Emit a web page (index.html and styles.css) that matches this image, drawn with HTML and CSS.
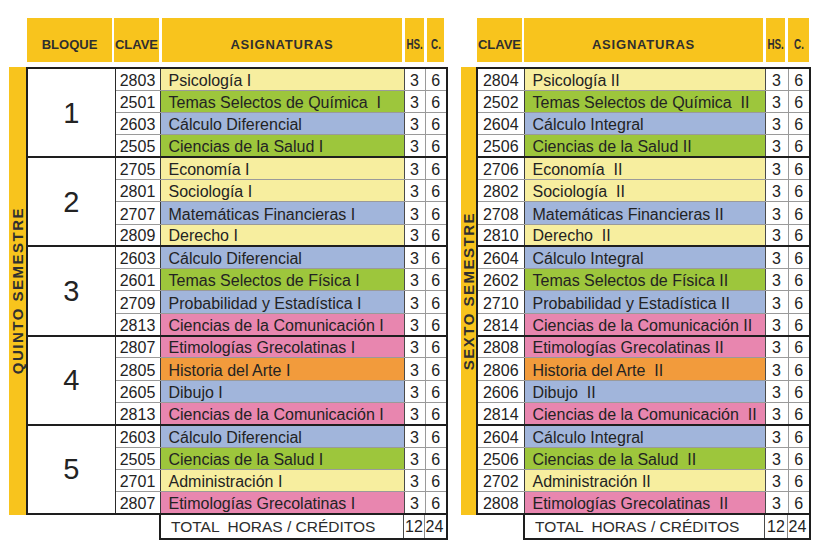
FILE: index.html
```html
<!DOCTYPE html>
<html lang="es">
<head>
<meta charset="utf-8">
<title>Quinto y Sexto Semestre</title>
<link rel="stylesheet" href="styles.css">
</head>
<body>
<div class="page">
  <section class="panel">
    <div class="head head-left">
      <div class="hcell h-bloque">BLOQUE</div>
      <div class="hcell h-clave">CLAVE</div>
      <div class="hcell h-asig">ASIGNATURAS</div>
      <div class="hcell h-hs"><span class="narrow">HS.</span></div>
      <div class="hcell h-c"><span class="narrow">C.</span></div>
    </div>
    <div class="body">
      <div class="side side-left"><span class="side-text">QUINTO SEMESTRE</span></div>
      <table class="grid grid-left">
        <colgroup>
          <col class="c-bloque"><col class="c-clave"><col class="c-asig"><col class="c-hs"><col class="c-c">
        </colgroup>
        <tbody>
          <tr><td class="bloque" rowspan="4">1</td><td class="code">2803</td><td class="subj yellow">Psicología I</td><td class="num">3</td><td class="num cr">6</td></tr>
          <tr><td class="code">2501</td><td class="subj green">Temas Selectos de Química &nbsp;I</td><td class="num">3</td><td class="num cr">6</td></tr>
          <tr><td class="code">2603</td><td class="subj blue">Cálculo Diferencial</td><td class="num">3</td><td class="num cr">6</td></tr>
          <tr><td class="code">2505</td><td class="subj green">Ciencias de la Salud I</td><td class="num">3</td><td class="num cr">6</td></tr>
        </tbody>
        <tbody>
          <tr><td class="bloque" rowspan="4">2</td><td class="code">2705</td><td class="subj yellow">Economía I</td><td class="num">3</td><td class="num cr">6</td></tr>
          <tr><td class="code">2801</td><td class="subj yellow">Sociología I</td><td class="num">3</td><td class="num cr">6</td></tr>
          <tr><td class="code">2707</td><td class="subj blue">Matemáticas Financieras I</td><td class="num">3</td><td class="num cr">6</td></tr>
          <tr><td class="code">2809</td><td class="subj yellow">Derecho I</td><td class="num">3</td><td class="num cr">6</td></tr>
        </tbody>
        <tbody>
          <tr><td class="bloque" rowspan="4">3</td><td class="code">2603</td><td class="subj blue">Cálculo Diferencial</td><td class="num">3</td><td class="num cr">6</td></tr>
          <tr><td class="code">2601</td><td class="subj green">Temas Selectos de Física I</td><td class="num">3</td><td class="num cr">6</td></tr>
          <tr><td class="code">2709</td><td class="subj blue">Probabilidad y Estadística I</td><td class="num">3</td><td class="num cr">6</td></tr>
          <tr><td class="code">2813</td><td class="subj pink">Ciencias de la Comunicación I</td><td class="num">3</td><td class="num cr">6</td></tr>
        </tbody>
        <tbody>
          <tr><td class="bloque" rowspan="4">4</td><td class="code">2807</td><td class="subj pink">Etimologías Grecolatinas I</td><td class="num">3</td><td class="num cr">6</td></tr>
          <tr><td class="code">2805</td><td class="subj orange">Historia del Arte I</td><td class="num">3</td><td class="num cr">6</td></tr>
          <tr><td class="code">2605</td><td class="subj blue">Dibujo I</td><td class="num">3</td><td class="num cr">6</td></tr>
          <tr><td class="code">2813</td><td class="subj pink">Ciencias de la Comunicación I</td><td class="num">3</td><td class="num cr">6</td></tr>
        </tbody>
        <tbody>
          <tr><td class="bloque" rowspan="4">5</td><td class="code">2603</td><td class="subj blue">Cálculo Diferencial</td><td class="num">3</td><td class="num cr">6</td></tr>
          <tr><td class="code">2505</td><td class="subj green">Ciencias de la Salud I</td><td class="num">3</td><td class="num cr">6</td></tr>
          <tr><td class="code">2701</td><td class="subj yellow">Administración I</td><td class="num">3</td><td class="num cr">6</td></tr>
          <tr><td class="code">2807</td><td class="subj pink">Etimologías Grecolatinas I</td><td class="num">3</td><td class="num cr">6</td></tr>
        </tbody>
      </table>
    </div>
    <div class="total total-left">
      <div class="t-label t-label-left">TOTAL &nbsp;HORAS / CRÉDITOS</div>
      <div class="t-num t-hs-left">12</div>
      <div class="t-num t-c">24</div>
    </div>
  </section>

  <section class="panel">
    <div class="head head-right">
      <div class="hcell h-clave-r">CLAVE</div>
      <div class="hcell h-asig-r">ASIGNATURAS</div>
      <div class="hcell h-hs"><span class="narrow">HS.</span></div>
      <div class="hcell h-c-r"><span class="narrow">C.</span></div>
    </div>
    <div class="body">
      <div class="side side-right"><span class="side-text">SEXTO SEMESTRE</span></div>
      <table class="grid grid-right">
        <colgroup>
          <col class="c-clave-r"><col class="c-asig-r"><col class="c-hs-r"><col class="c-c">
        </colgroup>
        <tbody>
          <tr><td class="code">2804</td><td class="subj yellow">Psicología II</td><td class="num">3</td><td class="num cr">6</td></tr>
          <tr><td class="code">2502</td><td class="subj green">Temas Selectos de Química &nbsp;II</td><td class="num">3</td><td class="num cr">6</td></tr>
          <tr><td class="code">2604</td><td class="subj blue">Cálculo Integral</td><td class="num">3</td><td class="num cr">6</td></tr>
          <tr><td class="code">2506</td><td class="subj green">Ciencias de la Salud II</td><td class="num">3</td><td class="num cr">6</td></tr>
        </tbody>
        <tbody>
          <tr><td class="code">2706</td><td class="subj yellow">Economía &nbsp;II</td><td class="num">3</td><td class="num cr">6</td></tr>
          <tr><td class="code">2802</td><td class="subj yellow">Sociología &nbsp;II</td><td class="num">3</td><td class="num cr">6</td></tr>
          <tr><td class="code">2708</td><td class="subj blue">Matemáticas Financieras II</td><td class="num">3</td><td class="num cr">6</td></tr>
          <tr><td class="code">2810</td><td class="subj yellow">Derecho &nbsp;II</td><td class="num">3</td><td class="num cr">6</td></tr>
        </tbody>
        <tbody>
          <tr><td class="code">2604</td><td class="subj blue">Cálculo Integral</td><td class="num">3</td><td class="num cr">6</td></tr>
          <tr><td class="code">2602</td><td class="subj green">Temas Selectos de Física II</td><td class="num">3</td><td class="num cr">6</td></tr>
          <tr><td class="code">2710</td><td class="subj blue">Probabilidad y Estadística II</td><td class="num">3</td><td class="num cr">6</td></tr>
          <tr><td class="code">2814</td><td class="subj pink">Ciencias de la Comunicación II</td><td class="num">3</td><td class="num cr">6</td></tr>
        </tbody>
        <tbody>
          <tr><td class="code">2808</td><td class="subj pink">Etimologías Grecolatinas II</td><td class="num">3</td><td class="num cr">6</td></tr>
          <tr><td class="code">2806</td><td class="subj orange">Historia del Arte &nbsp;II</td><td class="num">3</td><td class="num cr">6</td></tr>
          <tr><td class="code">2606</td><td class="subj blue">Dibujo &nbsp;II</td><td class="num">3</td><td class="num cr">6</td></tr>
          <tr><td class="code">2814</td><td class="subj pink">Ciencias de la Comunicación &nbsp;II</td><td class="num">3</td><td class="num cr">6</td></tr>
        </tbody>
        <tbody>
          <tr><td class="code">2604</td><td class="subj blue">Cálculo Integral</td><td class="num">3</td><td class="num cr">6</td></tr>
          <tr><td class="code">2506</td><td class="subj green">Ciencias de la Salud &nbsp;II</td><td class="num">3</td><td class="num cr">6</td></tr>
          <tr><td class="code">2702</td><td class="subj yellow">Administración II</td><td class="num">3</td><td class="num cr">6</td></tr>
          <tr><td class="code">2808</td><td class="subj pink">Etimologías Grecolatinas &nbsp;II</td><td class="num">3</td><td class="num cr">6</td></tr>
        </tbody>
      </table>
    </div>
    <div class="total total-right">
      <div class="t-label t-label-right">TOTAL &nbsp;HORAS / CRÉDITOS</div>
      <div class="t-num t-hs-right">12</div>
      <div class="t-num t-c">24</div>
    </div>
  </section>
</div>
</body>
</html>
```

FILE: styles.css
```css
html, body {
  margin: 0;
  padding: 0;
  background: #ffffff;
}

body {
  font-family: "Liberation Sans", Arial, sans-serif;
  color: #222222;
}

.page {
  display: flex;
  align-items: flex-start;
  gap: 13px;
  padding: 18px 0 0 9px;
}

.panel {
  display: flex;
  flex-direction: column;
}

/* ---------- header ---------- */
.head {
  display: flex;
  height: 44px;
  margin-bottom: 5px;
}

.head-left {
  margin-left: 18px;
}

.head-right {
  margin-left: 16px;
}

.hcell {
  background: #f8c41d;
  display: flex;
  align-items: flex-end;
  justify-content: center;
  padding-bottom: 10px;
  box-sizing: border-box;
  font-weight: bold;
  font-size: 13px;
  line-height: 15px;
  color: #2f2f2f;
  white-space: nowrap;
}

.h-bloque { width: 85px; margin-right: 2px; }
.h-clave { width: 45px; margin-right: 3px; }
.h-asig { width: 240px; margin-right: 3px; letter-spacing: 0.8px; }
.h-hs { width: 19px; margin-right: 3px; }
.h-c { width: 17px; }

.h-clave-r { width: 45px; margin-right: 2px; }
.h-asig-r { width: 239px; margin-right: 3px; letter-spacing: 0.8px; }
.h-c-r { width: 21px; }

.narrow {
  display: inline-block;
  font-size: 14px;
  transform: scaleX(0.7);
}

/* ---------- body ---------- */
.body {
  display: flex;
  align-items: stretch;
}

.side {
  background: #f8c41d;
  display: flex;
  align-items: center;
  justify-content: center;
}

.side-left { width: 17px; }
.side-right { width: 15px; }

.side-text {
  writing-mode: vertical-rl;
  transform: rotate(180deg);
  font-weight: bold;
  font-size: 15px;
  letter-spacing: 1.5px;
  color: #303030;
  white-space: nowrap;
}

.grid {
  border-collapse: collapse;
  table-layout: fixed;
  border: 2px solid #1e1e1e;
}

.grid-left { width: 420px; }
.grid-right { width: 333px; }

.c-bloque { width: 88px; }
.c-clave { width: 45px; }
.c-asig { width: 244px; }
.c-hs { width: 21px; }
.c-c { width: 22px; }

.c-clave-r { width: 47px; }
.c-asig-r { width: 241px; }
.c-hs-r { width: 23px; }

.grid tbody {
  border-top: 2px solid #1e1e1e;
}

.grid tr {
  height: 22.3px;
}

.grid td {
  border: 1px solid #9a9a9a;
  padding: 0;
  vertical-align: bottom;
  font-size: 16px;
  line-height: 19px;
  color: #232323;
  background: #ffffff;
  white-space: nowrap;
  overflow: hidden;
}

.grid td.bloque {
  font-size: 29px;
  line-height: 32px;
  vertical-align: middle;
  text-align: center;
  border-right: 1px solid #2a2a2a;
}

.grid td.code {
  text-align: center;
  border-right: 1px solid #3a3a3a;
}

.grid td.subj {
  padding-left: 8px;
  border-right: 1px solid #4a4a4a;
}

.grid td.num {
  text-align: center;
}

.grid td.cr {
  border-left: 1px solid #8a8a8a;
}

.yellow { background: #f7ee9f !important; }
.green { background: #9dc63c !important; }
.blue { background: #a1b5db !important; }
.pink { background: #e886af !important; }
.orange { background: #f29b3c !important; }

/* ---------- total ---------- */
.total {
  display: flex;
  height: 23px;
  border: 2px solid #1e1e1e;
  border-top: none;
  box-sizing: content-box;
}

.total-left { margin-left: 150px; }
.total-right { margin-left: 62px; }

.t-label {
  font-size: 15.5px;
  line-height: 23px;
  color: #2c2c2c;
  padding-left: 10px;
  box-sizing: border-box;
  white-space: nowrap;
}

.t-label-left { width: 242px; }
.t-label-right { width: 239px; }

.t-num {
  font-size: 16px;
  line-height: 23px;
  text-align: center;
  color: #232323;
  border-left: 1px solid #4a4a4a;
  box-sizing: border-box;
}

.t-hs-left { width: 21px; }
.t-hs-right { width: 23px; }
.t-c { width: 20px; border-left-color: #8a8a8a; }
```
